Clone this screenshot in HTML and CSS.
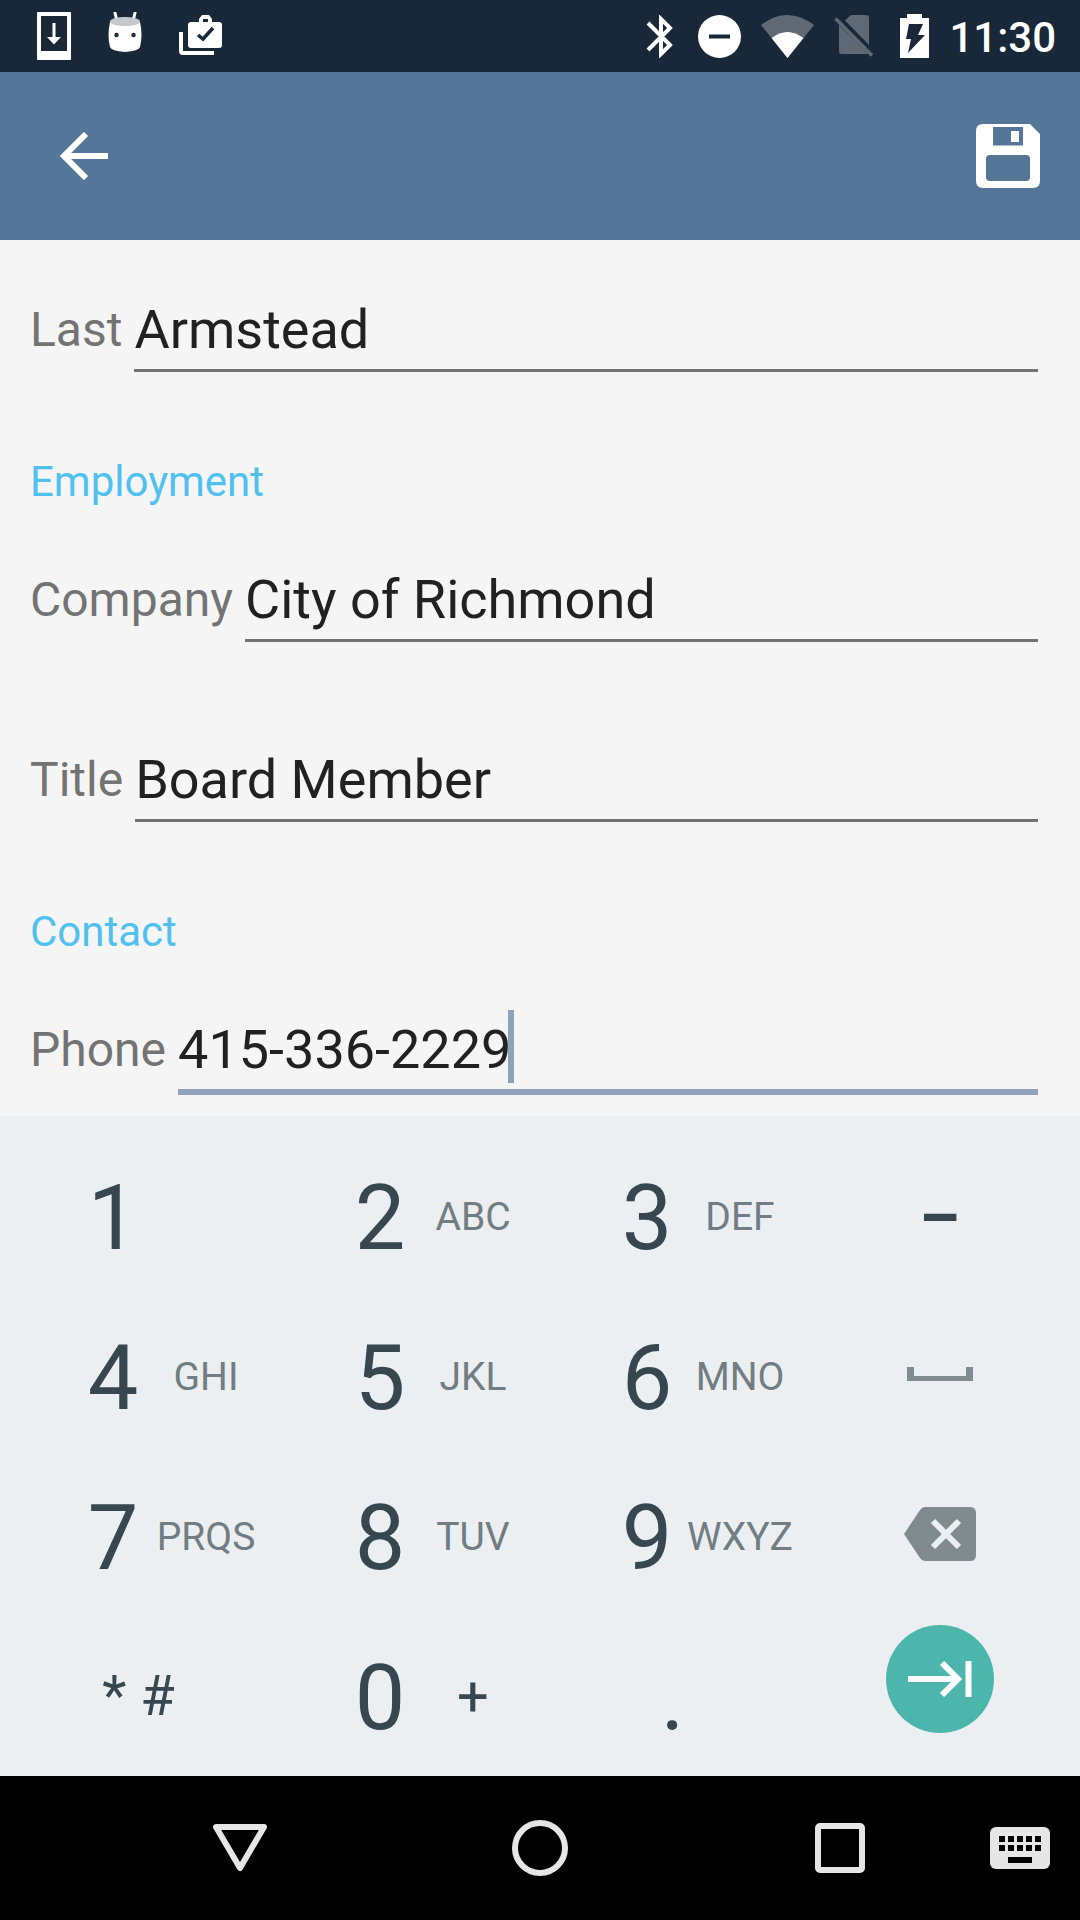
FILE: index.html
```html
<!DOCTYPE html>
<html lang="en">
<head>
<meta charset="utf-8">
<meta name="viewport" content="width=device-width, initial-scale=1">
<title>Edit contact</title>
<link rel="stylesheet" href="styles.css">
</head>
<body>
<div class="screen">
  <header class="status">
    <div class="status-group status-left">
      <svg width="34" height="48" viewBox="0 0 34 48" aria-hidden="true"><path fill="#fff" fill-rule="evenodd" d="M1 0h32q1 0 1 1v46q0 1-1 1H1q-1 0-1-1V1q0-1 1-1zM4 4v35h26V4z"/><path fill="#fff" d="M15.500 11h3v14H24l-7 7.500L10 25h5.500z"/></svg>
      <svg width="36" height="48" viewBox="-1 1 36 48" aria-hidden="true"><path d="M7 2l2 8M27 2l-2 8" stroke="#fff" stroke-width="3" stroke-linecap="round"/><path fill="#fff" d="M2 11Q-1 24 2 36q1 4 15 5 14-1 15-5 3-12 0-25z"/><ellipse cx="17" cy="10.500" rx="15" ry="4.500" fill="#c4c9cd"/><circle cx="8.500" cy="24" r="2.200" fill="#182838"/><circle cx="25.500" cy="24" r="2.200" fill="#182838"/></svg>
      <svg width="43" height="42" viewBox="0 0 43 42" aria-hidden="true"><path fill="#fff" fill-rule="evenodd" d="M20 7V4l3-4h7l3 4v3h7q3 0 3 3v20q0 3-3 3H12q-3 0-3-3V10q0-3 3-3zM24 4v3h5V4z"/><path d="M19 20l5 4L34 13" fill="none" stroke="#182838" stroke-width="3.500"/><path d="M2 17v19q0 2 2 2h31" fill="none" stroke="#fff" stroke-width="4"/></svg>
    </div>
    <div class="status-group">
      <svg width="32" height="43" viewBox="0 0 32 43" aria-hidden="true"><path d="M2 8l22 22-9 9V4l9 9L2 35" fill="none" stroke="#fff" stroke-width="4"/></svg>
      <svg width="43" height="43" viewBox="0 0 43 43" aria-hidden="true"><circle cx="21.500" cy="21.500" r="21.500" fill="#fff"/><path fill="#182838" d="M11 19.500h21v4H11z"/></svg>
      <svg width="53" height="43" viewBox="0 0 53 43" aria-hidden="true"><path fill="#5e6974" d="M0 10Q26-10 53 10L26.500 43z"/><path fill="#fff" d="M10.500 23Q26.500 11 42.500 23l-16 20z"/></svg>
      <svg width="40" height="42" viewBox="0 0 40 42" aria-hidden="true"><path fill="#5e6974" d="M17 0h15q3 0 3 3v27L11 5.500zM5 10l29.500 29-2.500 0H8q-3 0-3-3z"/><path d="M1.500 3.500l36.500 37" stroke="#5e6974" stroke-width="3.500"/></svg>
      <svg width="35" height="44" viewBox="-6 0 35 44" aria-hidden="true"><path fill="#fff" d="M7 0h15v4h7v40H0V4h7z"/><path fill="#182838" d="M9 10h14l-5 11h7L8 39l3-14H6z"/></svg>
      <time class="clock">11:30</time>
    </div>
  </header>

  <div class="appbar">
    <button class="icon-button" type="button" aria-label="Back"><svg width="48" height="48" viewBox="0 0 48 48"><path d="M26 2L4 24l22 22M5 24h43" fill="none" stroke="#fff" stroke-width="6"/></svg></button>
    <button class="icon-button" type="button" aria-label="Save"><svg width="64" height="64" viewBox="0 0 64 64"><path fill="#fff" fill-rule="evenodd" d="M7 0h47l10 10v47q0 7-7 7H7q-7 0-7-7V7q0-7 7-7zM17 3v18.500h30V3zM14 31q-4 0-4 4v18q0 4 4 4h36q4 0 4-4V35q0-4-4-4z"/><path fill="#fff" d="M35 7h8v11h-8z"/></svg></button>
  </div>

  <form class="form">
    <div class="field">
      <label class="label" for="last">Last</label>
      <div class="control"><input class="input" id="last" type="text" value="Armstead"></div>
    </div>
    <h2 class="section">Employment</h2>
    <div class="field">
      <label class="label" for="company">Company</label>
      <div class="control"><input class="input" id="company" type="text" value="City of Richmond"></div>
    </div>
    <div class="field">
      <label class="label" for="title">Title</label>
      <div class="control"><input class="input" id="title" type="text" value="Board Member"></div>
    </div>
    <h2 class="section">Contact</h2>
    <div class="field">
      <label class="label" for="phone">Phone</label>
      <div class="control"><input class="input input-active" id="phone" type="tel" value="415-336-2229"><span class="caret"></span></div>
    </div>
  </form>

  <div class="keypad">
    <button class="key" type="button"><span class="digit">1</span><span class="letters"></span></button>
    <button class="key" type="button"><span class="digit">2</span><span class="letters">ABC</span></button>
    <button class="key" type="button"><span class="digit">3</span><span class="letters">DEF</span></button>
    <button class="key key-side key-dash" type="button">–</button>

    <button class="key" type="button"><span class="digit">4</span><span class="letters">GHI</span></button>
    <button class="key" type="button"><span class="digit">5</span><span class="letters">JKL</span></button>
    <button class="key" type="button"><span class="digit">6</span><span class="letters">MNO</span></button>
    <button class="key key-side" type="button" aria-label="Space"><svg width="66" height="14" viewBox="0 0 66 14"><path fill="#7f8b8e" d="M0 0h7v9h52V0h7v14H0z"/></svg></button>

    <button class="key" type="button"><span class="digit">7</span><span class="letters">PRQS</span></button>
    <button class="key" type="button"><span class="digit">8</span><span class="letters">TUV</span></button>
    <button class="key" type="button"><span class="digit">9</span><span class="letters">WXYZ</span></button>
    <button class="key key-side" type="button" aria-label="Delete"><svg width="72" height="54" viewBox="0 0 72 54"><path fill="#7f8b8e" d="M21 0h45q6 0 6 6v42q0 6-6 6H21q-3 0-5-3L0 27 16 3q2-3 5-3z"/><path d="M29 14l26 26M55 14L29 40" stroke="#ebeff2" stroke-width="6"/></svg></button>

    <button class="key key-symbol" type="button">* #</button>
    <button class="key" type="button"><span class="digit">0</span><span class="letters plus">+</span></button>
    <button class="key key-symbol key-dot" type="button">.</button>
    <button class="key key-side key-next" type="button" aria-label="Next"><span class="next"><svg width="64" height="36" viewBox="0 0 64 36"><path d="M0 18h50M34 2l16 16-16 16M60.500 0v36" fill="none" stroke="#fff" stroke-width="6"/></svg></span></button>
  </div>

  <nav class="navbar">
    <button class="nav-button" type="button" aria-label="Back"><svg width="56" height="56" viewBox="0 0 56 56"><path d="M4 7h48L28 48z" fill="none" stroke="#e6e6e6" stroke-width="6" stroke-linejoin="round"/></svg></button>
    <button class="nav-button" type="button" aria-label="Home"><svg width="56" height="56" viewBox="0 0 56 56"><circle cx="28" cy="28" r="25" fill="none" stroke="#e6e6e6" stroke-width="6"/></svg></button>
    <button class="nav-button" type="button" aria-label="Recent apps"><svg width="50" height="50" viewBox="0 0 50 50"><rect x="3" y="3" width="44" height="44" rx="2" fill="none" stroke="#e6e6e6" stroke-width="6"/></svg></button>
    <button class="nav-button" type="button" aria-label="Choose keyboard"><svg width="60" height="42" viewBox="0 0 60 42"><rect width="60" height="42" rx="6" fill="#e6e6e6"/><path d="M9 12h42M9 21h42" stroke="#000" stroke-width="6" stroke-dasharray="6 3"/><path fill="#000" d="M18 30h24v6H18z"/></svg></button>
  </nav>
</div>
</body>
</html>
```
FILE: styles.css
```css
* {
  box-sizing: border-box;
}

body {
  margin: 0;
  font-family: Roboto, "Noto Sans", sans-serif;
  background: #f5f5f5;
}

button {
  padding: 0;
  border: 0;
  background: none;
  color: inherit;
  font: inherit;
}

svg {
  display: block;
}

.screen {
  display: flex;
  flex-direction: column;
  height: 100vh;
}

/* Status bar */
.status {
  flex: none;
  display: flex;
  align-items: center;
  justify-content: space-between;
  height: 72px;
  padding: 0 24px 0 37px;
  background: #182838;
  color: #fff;
}

.status-group {
  display: flex;
  align-items: center;
  gap: 20px;
}

.status-left {
  gap: 36px;
}

.clock {
  padding-top: 4px;
  font-size: 42px;
  line-height: 48px;
  font-weight: 500;
}

/* App bar */
.appbar {
  flex: none;
  display: flex;
  align-items: center;
  justify-content: space-between;
  height: 168px;
  padding: 0 40px 0 60px;
  background: #547699;
}

/* Form */
.form {
  flex: 1;
  min-height: 0;
  overflow-y: auto;
  scrollbar-width: none;
  padding: 0 42px 0 30px;
}

.field {
  display: flex;
  align-items: flex-start;
  gap: 12px;
  height: 180px;
  padding-top: 57px;
}

.label {
  padding-top: 5px;
  font-size: 48px;
  line-height: 56px;
  color: #737373;
}

.control {
  position: relative;
  flex: 1;
}

.input {
  display: block;
  width: 100%;
  height: 75px;
  padding: 0 0 8px;
  border: 0;
  border-bottom: 3px solid #737373;
  border-radius: 0;
  outline: 0;
  background: none;
  font: 54px/64px Roboto, "Noto Sans", sans-serif;
  color: #212121;
}

.input-active {
  height: 78px;
  border-bottom: 6px solid #90a2b9;
}

.caret {
  position: absolute;
  left: 330px;
  top: -7px;
  width: 6px;
  height: 73px;
  background: #90a2b9;
}

.section {
  height: 90px;
  margin: 0;
  padding-top: 37px;
  font-size: 42px;
  line-height: 50px;
  font-weight: 400;
  color: #50c0ee;
}

/* Keypad */
.keypad {
  flex: none;
  display: grid;
  grid-template-columns: 267fr 267fr 267fr 227fr;
  grid-auto-rows: 156px;
  row-gap: 4px;
  padding: 22px 26px 2px;
  background: #ebeff2;
  color: #37474f;
}

.key {
  display: flex;
  align-items: center;
  justify-content: center;
  padding-left: 21px;
}

.digit {
  width: 72px;
  padding-top: 6px;
  font-size: 90px;
  line-height: 106px;
}

.letters {
  width: 114px;
  padding-top: 2px;
  font-size: 39px;
  line-height: 48px;
  color: #717d82;
}

.plus,
.key-symbol {
  font-size: 56px;
  line-height: 64px;
  color: #37474f;
}

.key-symbol {
  padding: 0 42px 0 0;
}

.key-dot {
  padding-top: 6px;
  font-size: 90px;
}

.key-side {
  padding: 0 2px 4px 0;
}

.key-dash {
  padding: 4px 2px 0 0;
  font-size: 64px;
  font-weight: 700;
}

.key-next {
  padding-bottom: 34px;
}

.next {
  display: flex;
  align-items: center;
  justify-content: center;
  width: 108px;
  height: 108px;
  border-radius: 50%;
  background: #4db6ac;
}

/* System navigation */
.navbar {
  flex: none;
  display: grid;
  grid-template-columns: 1fr 1fr 1fr 60px;
  height: 144px;
  padding: 0 30px 0 90px;
  background: #000;
}

.nav-button {
  display: flex;
  align-items: center;
  justify-content: center;
}
```
